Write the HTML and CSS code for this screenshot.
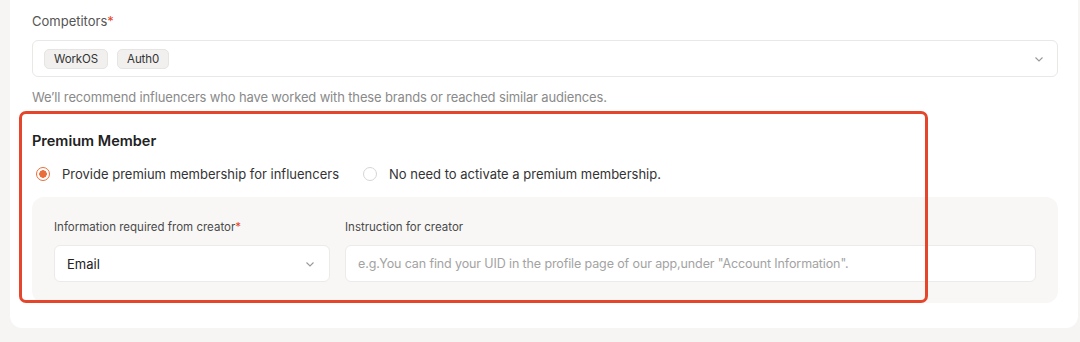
FILE: index.html
```html
<!DOCTYPE html>
<html lang="en">
<head>
  <meta charset="UTF-8" />
  <title>Premium Member</title>
  <link rel="stylesheet" href="styles.css">
</head>
<body>
  <div class="card">

    <!-- Competitors -->
    <div class="field">
      <div class="label">Competitors<span class="req">*</span></div>
      <div class="select multi">
        <div class="tags">
          <span class="tag">WorkOS</span>
          <span class="tag">Auth0</span>
        </div>
        <svg class="chev" viewBox="0 0 12 12"><path d="M2.5 4.5 6 8l3.5-3.5" /></svg>
      </div>
      <div class="help">We’ll recommend influencers who have worked with these brands or reached similar audiences.</div>
    </div>

    <!-- Premium -->
    <div class="premium">
      <div class="title">Premium Member</div>
      <div class="radios">
        <label class="radio on"><span class="dot"></span>Provide premium membership for influencers</label>
        <label class="radio"><span class="dot"></span>No need to activate a premium membership.</label>
      </div>
      <div class="panel">
        <div class="col col-small">
          <div class="label sm">Information required from creator<span class="req">*</span></div>
          <div class="select white">
            <span>Email</span>
            <svg class="chev" viewBox="0 0 12 12"><path d="M2.5 4.5 6 8l3.5-3.5" /></svg>
          </div>
        </div>
        <div class="col col-wide">
          <div class="label sm">Instruction for creator</div>
          <div class="input">e.g.You can find your UID in the profile page of our app,under "Account Information".</div>
        </div>
      </div>
      <div class="mark"></div>
    </div>

  </div>
</body>
</html>
```

FILE: styles.css
```css
body {
  margin: 0;
  background: #f6f5f4;
  font-family: Inter, "Liberation Sans", sans-serif;
  color: #2b2b2b;
}

.card {
  background: #fff;
  margin: 0 2px 0 10px;
  padding: 12px 20px 24px 22px;
  border-radius: 0 0 12px 12px;
  height: 292px;
}

/* Поля */
.label {
  font-size: 13px;
  color: #555;
  line-height: 18px;
}
.label.sm {
  font-size: 11.5px;
  color: #4a4a4a;
}
.req {
  color: #e5452b;
}

.select {
  display: flex;
  align-items: center;
  justify-content: space-between;
  border: 1px solid #e9e8e7;
  border-radius: 6px;
  box-sizing: border-box;
}
.multi {
  margin-top: 10px;
  height: 37px;
  padding: 0 12px 0 11px;
}
.tags {
  display: flex;
  gap: 9px;
}
.tag {
  background: #f1f0ef;
  border: 1px solid #e6e5e4;
  border-radius: 5px;
  font-size: 11.5px;
  line-height: 14px;
  padding: 2px 9px;
  color: #333;
  letter-spacing: -0.1px;
}
.chev {
  width: 12px;
  height: 12px;
  fill: none;
  stroke: #999;
  stroke-width: 1.1;
}
.help {
  font-size: 13px;
  color: #8a8a8a;
  margin-top: 12px;
  letter-spacing: -0.15px;
}

/* Премиум */
.premium {
  position: relative;
  margin-top: 27px;
}
.title {
  font-size: 14.5px;
  font-weight: 600;
  color: #222;
}
.radios {
  display: flex;
  gap: 24px;
  margin-top: 17px;
  padding-left: 4px;
}
.radio {
  display: flex;
  align-items: center;
  gap: 12px;
  font-size: 13px;
  color: #333;
}
.dot {
  width: 14px;
  height: 14px;
  border-radius: 50%;
  border: 1px solid #d6d6d6;
  box-sizing: border-box;
}
.radio.on .dot {
  border: 1.5px solid #ea6d3c;
  background: radial-gradient(circle, #ea6d3c 0 3.5px, #fff 4px);
}

.panel {
  margin-top: 15px;
  background: #f8f7f6;
  border-radius: 12px;
  padding: 21px 22px 21px 22px;
  display: flex;
  gap: 15px;
}
.col-small {
  width: 276px;
}
.col-wide {
  flex: 1;
}
.select.white,
.input {
  margin-top: 9px;
  height: 37px;
  background: #fff;
  border: 1px solid #ecebea;
  border-radius: 6px;
  box-sizing: border-box;
  font-size: 13px;
}
.select.white {
  padding: 0 13px 0 12px;
  color: #222;
}
.input {
  display: flex;
  align-items: center;
  padding: 0 12px;
  font-size: 12.5px;
  letter-spacing: -0.12px;
  color: #a3a3a3;
  white-space: nowrap;
}

/* Красная рамка поверх */
.mark {
  position: absolute;
  left: -13px;
  top: -21px;
  width: 909px;
  height: 192px;
  border: 3.5px solid #e5452b;
  border-radius: 7px;
  box-sizing: border-box;
  pointer-events: none;
}
```
